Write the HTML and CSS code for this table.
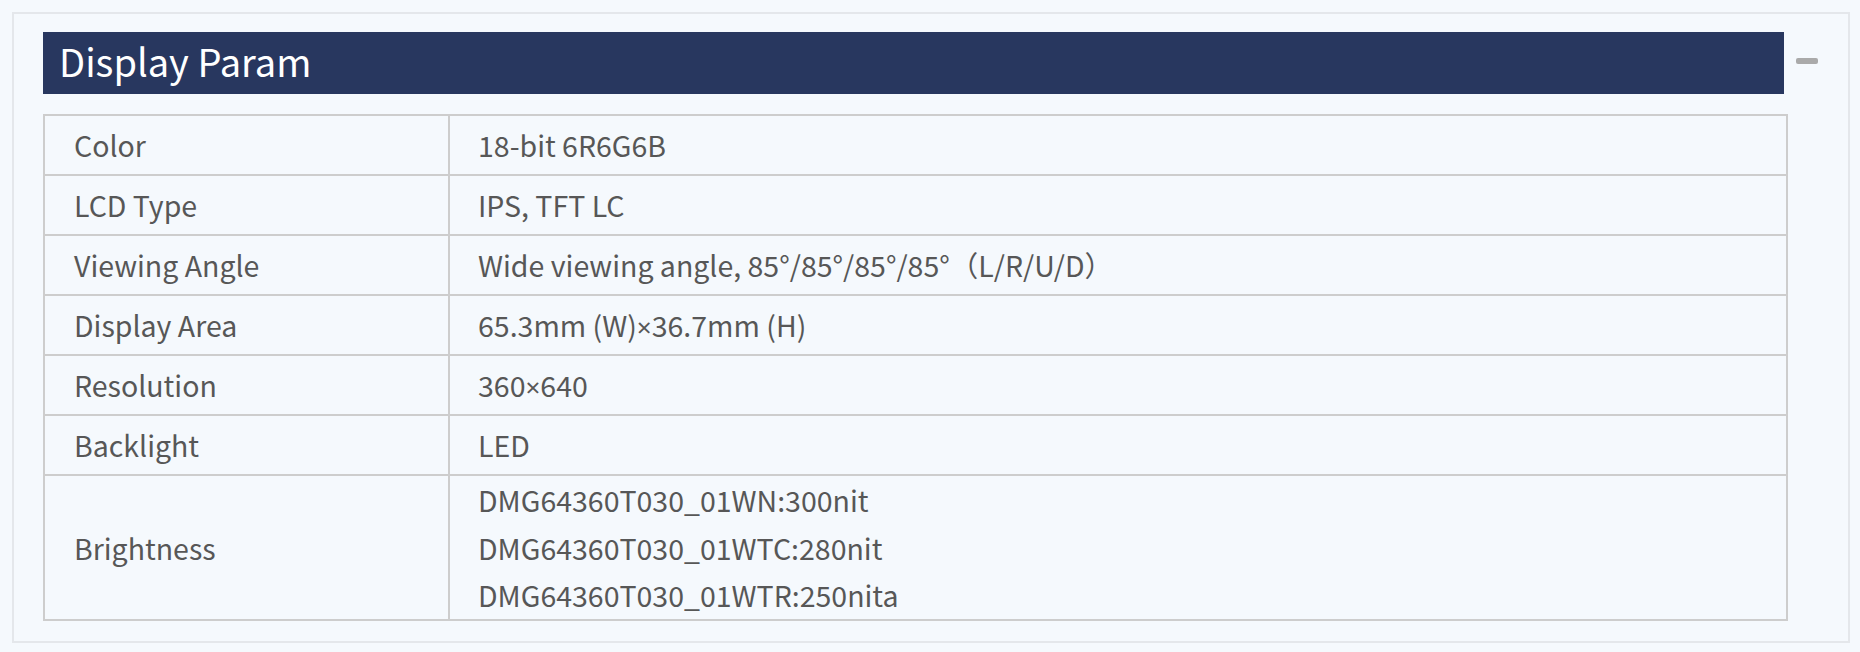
FILE: index.html
```html
<!DOCTYPE html>
<html lang="en">
<head>
<meta charset="utf-8">
<title>Display Param</title>
<link rel="stylesheet" href="styles.css">
</head>
<body>
<section class="panel">
  <div class="panel-head">
    <h2 class="panel-title">Display Param</h2>
    <button class="toggle" aria-label="Collapse"></button>
  </div>
  <div class="spec">
    <div class="cell key">Color</div>
    <div class="cell val">18-bit 6R6G6B</div>
    <div class="cell key">LCD Type</div>
    <div class="cell val">IPS, TFT LC</div>
    <div class="cell key">Viewing Angle</div>
    <div class="cell val">Wide viewing angle, 85°/85°/85°/85°（L/R/U/D）</div>
    <div class="cell key">Display Area</div>
    <div class="cell val">65.3mm (W)<span class="latin">×</span>36.7mm (H)</div>
    <div class="cell key">Resolution</div>
    <div class="cell val">360<span class="latin">×</span>640</div>
    <div class="cell key">Backlight</div>
    <div class="cell val">LED</div>
    <div class="cell key">Brightness</div>
    <div class="cell val multi">
      <div class="line">DMG64360T030_01WN:300nit</div>
      <div class="line">DMG64360T030_01WTC:280nit</div>
      <div class="line">DMG64360T030_01WTR:250nita</div>
    </div>
  </div>
</section>
</body>
</html>
```
FILE: styles.css
```css
html, body {
  margin: 0;
  padding: 0;
  background: #f5f9fd;
}
body {
  padding: 12px 10px 9px 12px;
  font-family: "Noto Sans CJK SC", "Noto Sans", sans-serif;
}
.panel {
  border: 2px solid #e4e7eb;
  background: #f5f9fd;
  padding: 18px 30px 20px 29px;
}
.panel-head {
  display: flex;
  align-items: flex-start;
}
.panel-title {
  flex: 1;
  margin: 0;
  height: 62px;
  line-height: 57px;
  padding-left: 16px;
  background: #28375f;
  color: #ffffff;
  font-size: 38px;
  font-weight: 400;
  box-sizing: border-box;
}
.toggle {
  width: 22px;
  height: 6px;
  margin: 26px 0 0 12px;
  padding: 0;
  border: 0;
  border-radius: 2px;
  background: #aaaaaa;
}
.spec {
  margin: 20px 30px 0 0;
  display: grid;
  grid-template-columns: 405px 1fr;
  border-right: 2px solid #cdcdcd;
  border-bottom: 2px solid #cdcdcd;
}
.cell {
  box-sizing: border-box;
  border-top: 2px solid #cdcdcd;
  border-left: 2px solid #cdcdcd;
  height: 60px;
  line-height: 57px;
  padding: 0 30px 0 28px;
  font-size: 28.5px;
  color: #575757;
  white-space: nowrap;
}
.key {
  padding-left: 29px;
}
.latin {
  font-family: "Noto Sans", sans-serif;
  font-size: 26px;
}
.cell.multi {
  height: auto;
  line-height: 47.5px;
}
.spec > .key:nth-last-child(2) {
  height: auto;
  display: flex;
  align-items: center;
}
```
